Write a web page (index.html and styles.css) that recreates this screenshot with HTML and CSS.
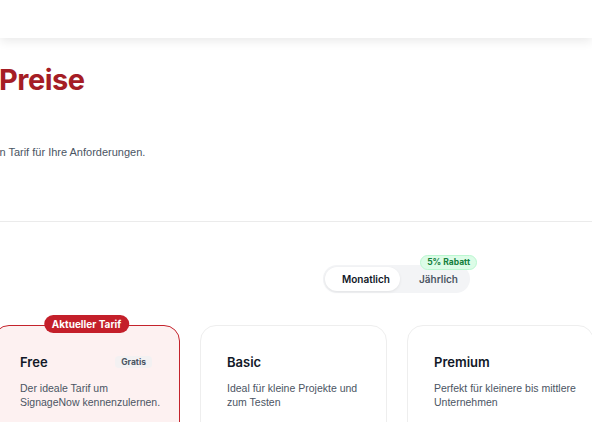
FILE: index.html
```html
<!DOCTYPE html>
<html lang="de">
<head>
    <meta charset="UTF-8">
    <meta name="viewport" content="width=device-width, initial-scale=1.0">
    <title>Preise</title>
    <link rel="stylesheet" href="styles.css">
</head>
<body>
    <header class="topbar"></header>

    <main class="page">
        <section class="intro">
            <h1>Preise</h1>
            <p class="lead">Wählen Sie den passenden Tarif für Ihre Anforderungen.</p>
        </section>

        <hr class="divider">

        <div class="billing">
            <div class="toggle">
                <span class="toggle-opt active">Monatlich</span>
                <span class="toggle-opt">Jährlich</span>
                <span class="discount">5% Rabatt</span>
            </div>
        </div>

        <div class="plans">
            <div class="plan current">
                <span class="current-badge">Aktueller Tarif</span>
                <div class="plan-head">
                    <h2>Free</h2>
                    <span class="tag">Gratis</span>
                </div>
                <p class="plan-desc">Der ideale Tarif um SignageNow kennenzulernen.</p>
            </div>
            <div class="plan">
                <div class="plan-head">
                    <h2>Basic</h2>
                </div>
                <p class="plan-desc">Ideal für kleine Projekte und zum Testen</p>
            </div>
            <div class="plan">
                <div class="plan-head">
                    <h2>Premium</h2>
                </div>
                <p class="plan-desc">Perfekt für kleinere bis mittlere Unternehmen</p>
            </div>
        </div>
    </main>
</body>
</html>
```

FILE: styles.css
```css
body {
    font-family: Inter, "Noto Sans", sans-serif;
    margin: 0;
    padding: 0;
    background-color: white;
    color: #111827;
    overflow: hidden;
}
.topbar {
    height: 38px;
    background-color: white;
    box-shadow: 0 3px 10px rgba(0, 0, 0, 0.09);
    position: relative;
}
.page {
    margin-left: -7px;
    width: 620px;
}
.intro {
    padding: 24px 0 0 6px;
    height: 159px;
}
h1 {
    font-size: 29px;
    line-height: 36px;
    font-weight: 700;
    color: #a51d25;
    margin: 0;
    letter-spacing: -0.5px;
}
.lead {
    font-family: "Liberation Sans", Arial, sans-serif;
    font-size: 11px;
    line-height: 16px;
    color: #4b5563;
    margin: 46px 0 0 -128px;
}
.divider {
    border: none;
    border-top: 1px solid #ebebeb;
    margin: 0 0 0 -20px;
    width: 700px;
}
.billing {
    padding: 43px 0 0 330px;
}
.toggle {
    position: relative;
    display: inline-flex;
    align-items: center;
    gap: 2px;
    background-color: #f3f4f6;
    border-radius: 14px;
    padding: 2px;
    width: 143px;
}
.toggle-opt {
    font-size: 10px;
    font-weight: 600;
    color: #4b5563;
    padding: 0 17px;
    height: 24px;
    line-height: 24px;
    border-radius: 12px;
}
.toggle-opt.active {
    background-color: white;
    color: #111827;
    box-shadow: 0 1px 3px rgba(0, 0, 0, 0.08);
    width: 41px;
}
.discount {
    position: absolute;
    top: -10px;
    right: -7px;
    font-size: 8.5px;
    font-weight: 700;
    color: #15803d;
    background-color: #dcfce7;
    border: 1px solid #bbf7d0;
    border-radius: 8px;
    padding: 0 6px;
    height: 13px;
    line-height: 13px;
}
.plans {
    display: flex;
    gap: 20px;
    margin-top: 32px;
}
.plan {
    position: relative;
    width: 187px;
    height: 200px;
    box-sizing: border-box;
    border: 1px solid #eeeeee;
    border-radius: 16px;
    padding: 25px 12px 0 26px;
    background-color: white;
    flex-shrink: 0;
}
.plan.current {
    background-color: #fdf1f1;
    border: 1.5px solid #c4232c;
}
.current-badge {
    position: absolute;
    top: -11px;
    left: 50%;
    transform: translateX(-50%);
    background-color: #c41f2a;
    color: white;
    font-size: 10px;
    font-weight: 700;
    padding: 0 8px;
    height: 18px;
    line-height: 18px;
    border-radius: 9px;
    white-space: nowrap;
}
.plan-head {
    display: flex;
    justify-content: space-between;
    align-items: center;
    height: 22px;
    padding-right: 15px;
}
h2 {
    font-size: 13px;
    font-weight: 600;
    margin: 0;
}
.tag {
    font-size: 8.5px;
    font-weight: 700;
    color: #4b5563;
    background-color: #f3f1f2;
    padding: 0 6px;
    height: 12px;
    line-height: 12px;
    border-radius: 4px;
}
.plan-desc {
    font-family: "Liberation Sans", Arial, sans-serif;
    font-size: 10.5px;
    line-height: 14px;
    color: #4b5563;
    margin: 8px 0 0;
}
```
